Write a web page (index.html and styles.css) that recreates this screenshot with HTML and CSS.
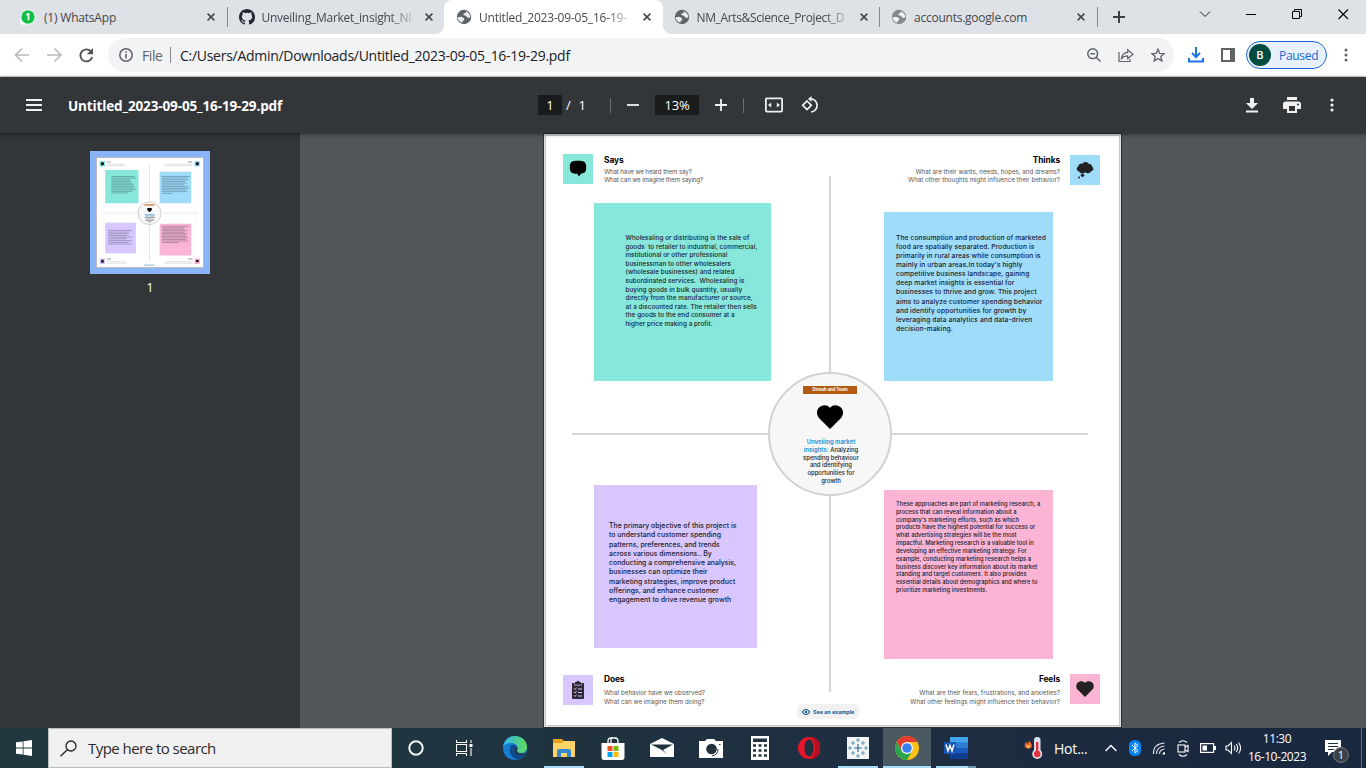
FILE: index.html
```html
<!DOCTYPE html>
<html lang="en">
<head>
<meta charset="utf-8">
<title>Untitled_2023-09-05_16-19-29.pdf</title>
<link rel="stylesheet" href="styles.css">
</head>
<body>
<svg class="defs" width="0" height="0">
  <symbol id="globe" viewBox="0 0 16 16"><circle cx="8" cy="8" r="7.2" fill="currentColor"/><path d="M1.500 8.300 5.300 7.800 8 9.300 8.300 11 6.400 12.300 6.600 13.700 4.200 12.800 2 10.500Z M8.500 1.800 10.800 2.300 9.500 4 7.500 4.500 7.600 6.300 10 6.800 11.500 8.800 14 8.800 14.300 7 12.800 4.300 11 3Z" fill="#fff" opacity=".88"/></symbol>
  <symbol id="x" viewBox="0 0 8 8"><path d="M.6.6 7.4 7.4M7.4.6.6 7.4" stroke="#45494d" stroke-width="1.6"/></symbol>
  <symbol id="heart" viewBox="0 0 26 24"><path d="M13 24 2.2 13.2C-.8 10.1-.6 5.4 1.8 2.8 4.800-.5 10-.7 13 2.700 16-.7 21.200-.5 24.200 2.800 26.600 5.400 26.800 10.100 23.800 13.200Z"/></symbol>
</svg>

<header class="tabs">
  <div class="tab"><svg class="fav" viewBox="0 0 16 16"><path d="M.5 15.500V8A7.500 7.500 0 1 1 8 15.500Z" fill="#fff"/><circle cx="8" cy="8" r="6.700" fill="#0fbf43"/><path d="M6.400 5.900 8.500 4.900V11.300" stroke="#fff" stroke-width="1.700" fill="none"/></svg><span class="label">(1) WhatsApp</span><svg class="close"><use href="#x"/></svg></div>
  <div class="tab line"><svg class="fav" viewBox="0 0 16 16"><path fill="#24292f" d="M8 0C3.580 0 0 3.580 0 8c0 3.540 2.290 6.530 5.470 7.590.4.070.55-.17.55-.38v-1.490c-2.010.37-2.530-.49-2.690-.94-.09-.23-.48-.94-.82-1.130-.28-.15-.68-.52-.01-.53.63-.01 1.080.58 1.230.82.72 1.210 1.870.87 2.330.66.07-.52.28-.87.51-1.070-1.780-.2-3.640-.89-3.640-3.950 0-.87.31-1.590.82-2.150-.08-.2-.36-1.020.08-2.120 0 0 .67-.21 2.200.82a7.500 7.500 0 0 1 4 0c1.530-1.040 2.200-.82 2.200-.82.44 1.100.16 1.920.08 2.120.51.560.82 1.270.82 2.150 0 3.070-1.870 3.750-3.650 3.950.29.250.54.730.54 1.480v2.200c0 .21.150.46.550.38A8 8 0 0 0 16 8c0-4.420-3.580-8-8-8Z"/></svg><span class="label fade git">Unveiling_Market_insight_NI</span><svg class="close"><use href="#x"/></svg></div>
  <div class="tab active"><svg class="fav"><use href="#globe"/></svg><span class="label fade">Untitled_2023-09-05_16-19-</span><svg class="close"><use href="#x"/></svg></div>
  <div class="tab"><svg class="fav"><use href="#globe"/></svg><span class="label fade nm">NM_Arts&amp;Science_Project_D</span><svg class="close"><use href="#x"/></svg></div>
  <div class="tab line"><svg class="fav pale"><use href="#globe"/></svg><span class="label acc">accounts.google.com</span><svg class="close"><use href="#x"/></svg></div>
  <div class="newtab"><svg width="12" height="12"><path d="M6 0V12M0 6H12" stroke="#3c4043" stroke-width="2"/></svg></div>
  <div class="winbtns">
    <svg width="46" height="28"><path d="M18 11.500 23 16.500 28 11.500" fill="none" stroke="#222"/></svg>
    <svg width="46" height="28"><path d="M18 14.500H28" stroke="#000"/></svg>
    <svg width="46" height="28"><path d="M18.500 11.500H25.500V18.500H18.500ZM20.500 11V9.500H27.500V16.500H26" fill="none" stroke="#000"/></svg>
    <svg width="46" height="28"><path d="M18.500 9.500 28 19M28 9.500 18.500 19" stroke="#000" stroke-width="1.100"/></svg>
  </div>
</header>

<div class="toolbar">
  <svg class="navs" width="86" height="20"><g fill="none" stroke="#b9bbbe" stroke-width="1.700"><path d="M20 10H7M13 3.500 6.500 10 13 16.500M38 10H52M45.500 3.500 52 10 45.500 16.500"/></g><path d="M82 6.500A6 6 0 1 0 83.200 12" fill="none" stroke="#505357" stroke-width="1.900"/><path d="M84 3V9.200H77.800Z" fill="#505357"/></svg>
  <div class="omnibox">
    <svg width="14" height="14"><circle cx="7" cy="7" r="6.200" fill="none" stroke="#5f6368" stroke-width="1.500"/><path d="M7 6V10.500M7 3.300V4.800" stroke="#5f6368" stroke-width="1.600"/></svg>
    <span class="scheme">File</span><i class="bar"></i><span class="url">C:/Users/Admin/Downloads/Untitled_2023-09-05_16-19-29.pdf</span>
    <div class="omni-icons">
      <svg width="14" height="14"><g fill="none" stroke="#5f6368" stroke-width="1.500"><circle cx="5.700" cy="5.700" r="4.900"/><path d="M9.200 9.200 13.500 13.500M3.300 5.700H8"/></g></svg>
      <svg width="16" height="15"><g fill="none" stroke="#5f6368" stroke-width="1.200"><path d="M1 4V13.500H12V11M3.500 10.500C4 6.500 6 4.700 9.700 4.400V1.700L15 6.300 9.700 10.800V7.900C7 7.900 5 8.700 3.500 10.500Z"/></g></svg>
      <svg width="14" height="14"><path d="M7 1.200 8.700 5.300 13.200 5.700 9.800 8.600 10.900 13 7 10.600 3.100 13 4.200 8.600.8 5.700 5.300 5.300Z" fill="none" stroke="#5f6368" stroke-width="1.300"/></svg>
    </div>
  </div>
  <svg class="dl" width="16" height="16"><path d="M8 0V9.500M4 6 8 10 12 6M1 11V14.500H15V11" fill="none" stroke="#1a73e8" stroke-width="2"/></svg>
  <svg class="side" width="14" height="14"><path d="M1 1H13V13H1Z" fill="none" stroke="#5f6368" stroke-width="2"/><path d="M9 1H13V13H9Z" fill="#5f6368"/></svg>
  <div class="profile"><b>B</b><span>Paused</span></div>
  <svg class="more" width="4" height="14" fill="#5f6368"><circle cx="2" cy="2" r="1.500"/><circle cx="2" cy="7" r="1.500"/><circle cx="2" cy="12" r="1.500"/></svg>
</div>

<div class="pdfbar">
  <div class="pdf-left"><svg width="16" height="12"><path d="M0 1H16M0 6H16M0 11H16" stroke="#f1f1f1" stroke-width="2"/></svg><span class="pdf-title">Untitled_2023-09-05_16-19-29.pdf</span></div>
  <div class="pdf-mid">
    <span class="box pg">1</span><span class="of">/&nbsp; 1</span><i></i>
    <svg class="minus" width="12" height="12"><path d="M0 6H12" stroke="#f1f1f1" stroke-width="1.800"/></svg>
    <span class="box pct">13%</span>
    <svg class="plus" width="12" height="12"><path d="M0 6H12M6 0V12" stroke="#f1f1f1" stroke-width="1.800"/></svg><i class="second"></i>
    <svg class="fit" width="18" height="16"><rect x=".9" y="1.400" width="16.200" height="13.200" rx="1" fill="none" stroke="#f1f1f1" stroke-width="1.800"/><path d="M3 8 6.200 5.600V10.400ZM15 8 11.800 5.600V10.400Z" fill="#f1f1f1"/></svg>
    <svg class="rotate" width="18" height="18"><path d="M6 5 10.300 9.300 6 13.600 1.700 9.300ZM9 2.800A6.600 6.600 0 1 1 10 16" fill="none" stroke="#f1f1f1" stroke-width="1.700"/><path d="M10.500 0V6L7 3Z" fill="#f1f1f1"/></svg>
  </div>
  <div class="pdf-right">
    <svg width="12" height="16"><path d="M4 1H8V6H12L6 12 0 6H4ZM0 13.500H12V15.500H0Z" fill="#f1f1f1"/></svg>
    <svg width="18" height="16"><path d="M4 0H14V3H4ZM3 4.500H15Q18 4.500 18 7V12H14V16H4V12H0V7Q0 4.500 3 4.500ZM6 9V14H12V9Z" fill="#f1f1f1" fill-rule="evenodd"/><circle cx="15" cy="7.500" r="1" fill="#323639"/></svg>
    <svg width="4" height="14" fill="#f1f1f1"><circle cx="2" cy="2" r="1.600"/><circle cx="2" cy="7" r="1.600"/><circle cx="2" cy="12" r="1.600"/></svg>
  </div>
</div>

<main>
  <aside>
    <div class="thumb">
      <svg width="108" height="111" viewBox="0 0 577 593">
        <rect x="2" y="2" width="573" height="589" fill="#fff" stroke="#bbb" stroke-width="7"/>
        <path d="M286 42V558" stroke="#ddd" stroke-width="4"/><path d="M28 300H544" stroke="#eee" stroke-width="7"/>
        <path d="M49 70H227V247H49Z" fill="#87e7da"/><path d="M340 79H509V247H340Z" fill="#9fdcfa"/><path d="M49 351H213V515H49Z" fill="#d8c7fe"/><path d="M340 357H509V526H340Z" fill="#fcb4d4"/>
        <path d="M19 21H49V51H19Z" fill="#87e7da"/><path d="M526 21H556V51H526Z" fill="#9fdcfa"/><path d="M19 542H49V572H19Z" fill="#d8c7fe"/><path d="M526 542H556V572H526Z" fill="#fcb4d4"/>
        <g fill="#111"><circle cx="34" cy="36" r="9"/><circle cx="541" cy="36" r="9"/><path d="M28 549H41V565H28Z"/><use href="#heart" x="532" y="549" width="18" height="16"/></g>
        <circle cx="286" cy="300" r="61" fill="#f7f7f7" stroke="#ccc" stroke-width="5"/><path d="M259 252H312V260H259Z" fill="#d28a4c"/><use href="#heart" x="273" y="271" width="26" height="24"/>
        <g stroke="#234" stroke-width="3.500" opacity=".5"><path d="M82 104H206M82 113H213M82 122H183M82 131H188M82 140H192M82 148H202M82 157H200M82 166H209M82 175H213M82 184H194M82 192H168M352 104H502M352 113H489M352 122H494M352 131H476M352 140H484M352 149H470M352 158H492M352 167H498M352 176H482M352 185H487M352 194H408M65 392H191M65 401H177M65 410H175M65 419H166M65 428H191M65 437H163M65 447H191M65 456H174M65 465H189M352 370H497M352 378H472M352 386H473M352 394H490M352 402H472M352 409H488M352 417H482M352 425H485M352 433H492M352 441H480M352 449H493M352 457H441"/><path d="M59 26H78M490 26H515M59 545H80M492 545H515" stroke-width="5"/><path d="M59 38H148M59 46H158M370 38H515M363 46H515M59 559H160M59 568H160M377 559H515M365 568H515" stroke-width="3" opacity=".55"/></g>
        <path d="M261 308H312M262 315H282" stroke="#37a5df" stroke-width="4"/><path d="M285 315H314M259 323H315M266 331H308M264 339H310M276 347H296" stroke="#888" stroke-width="4"/><path d="M255 578H314" stroke="#a8cbdc" stroke-width="7"/>
      </svg>
    </div>
    <span class="thumb-no">1</span>
  </aside>
  <section class="viewer">
    <article class="page">
      <div class="axis vert"></div><div class="axis horiz"></div>

      <div class="tile says-tile"><svg width="18" height="18"><path d="M9 .8C14.500.8 17.200 1.500 17.200 7S15.500 13 12.500 13.500L9.500 16.500 8.500 13.700C2.500 13.700 .8 12.500 .8 7S3.500.8 9 .8Z"/></svg></div>
      <div class="head says-head"><h2>Says</h2><p>What have we heard them say?<br>What can we imagine them saying?</p></div>
      <div class="tile thinks-tile"><svg width="18" height="18" fill="#222"><path d="M3 10.500C0 9.800.1 6.400 2.200 5.400 2.700 2.800 5 2.200 6.500 2.700 8 .2 12 .8 12.700 3 15 2.600 16.300 4.400 16.100 5.800 18.300 7.300 17.500 10 15 10.200 14 12.800 10.600 12.800 9.500 11.300 7.300 13 4 12.600 3 10.500Z"/><circle cx="6.500" cy="14.300" r="1.700"/><circle cx="3" cy="16.500" r="1"/></svg></div>
      <div class="head right thinks-head"><h2>Thinks</h2><p>What are their wants, needs, hopes, and dreams?<br>What other thoughts might influence their behavior?</p></div>
      <div class="tile does-tile"><svg width="14" height="20"><path d="M1.500 3H3.500V5.500H10.500V3H12.500Q13 3 13 3.500V18Q13 19 12 19H2Q1 19 1 18V3.500Q1 3 1.500 3Z" fill="#2d2935"/><path d="M4 2H5.500Q7-.5 8.500 2H10V4.800H4Z" fill="#2d2935"/><path d="M3 8.500 4 9.500 5.500 7.700M3 12 4 13 5.500 11.200M3 15.500 4 16.500 5.500 14.700M7 9H11M7 12.500H11M7 16H11" stroke="#d8c7fe" fill="none"/></svg></div>
      <div class="head does-head low"><h2>Does</h2><p>What behavior have we observed?<br>What can we imagine them doing?</p></div>
      <div class="tile feels-tile"><svg width="18" height="16" fill="#222"><use href="#heart"/></svg></div>
      <div class="head right feels-head low"><h2>Feels</h2><p>What are their fears, frustrations, and anxieties?<br>What other feelings might influence their behavior?</p></div>

      <div class="note says">Wholesaling or distributing is the sale of
goods  to retailer to industrial, commercial,
institutional or other professional
businessman to other wholesalers
(wholesale businesses) and related
subordinated services.  Wholesaling is
buying goods in bulk quantity, usually
directly from the manufacturer or source,
at a discounted rate. The retailer then sells
the goods to the end consumer at a
higher price making a profit.</div>
      <div class="note thinks">The consumption and production of marketed
food are spatially separated. Production is
primarily in rural areas while consumption is
mainly in urban areas.In today's highly
competitive business landscape, gaining
deep market insights is essential for
businesses to thrive and grow. This project
aims to analyze customer spending behavior
and identify opportunities for growth by
leveraging data analytics and data-driven
decision-making.</div>
      <div class="note does">The primary objective of this project is
to understand customer spending
patterns, preferences, and trends
across various dimensions.. By
conducting a comprehensive analysis,
businesses can optimize their
marketing strategies, improve product
offerings, and enhance customer
engagement to drive revenue growth</div>
      <div class="note feels">These approaches are part of marketing research, a
process that can reveal information about a
company's marketing efforts, such as which
products have the highest potential for success or
what advertising strategies will be the most
impactful. Marketing research is a valuable tool in
developing an effective marketing strategy. For
example, conducting marketing research helps a
business discover key information about its market
standing and target customers. It also provides
essential details about demographics and where to
prioritize marketing investments.</div>

      <div class="hub">
        <span class="team">Dinesh and Team</span>
        <svg width="26" height="24"><use href="#heart"/></svg>
        <p><em>Unveiling market<br>insights:</em> Analyzing<br>spending behaviour<br>and identifying<br>opportunities for<br>growth</p>
      </div>
      <div class="example"><svg width="8" height="6"><path d="M.4 3Q4-2 7.600 3 4 8 .4 3Z" fill="none" stroke="#145e96" stroke-width="1.100"/><circle cx="4" cy="3" r="1.200" fill="#145e96"/></svg><span>See an example</span></div>
    </article>
  </section>
</main>

<footer class="taskbar">
  <div class="start"><svg width="16" height="16" fill="#fff"><path d="M0 2.300 6.700 1.400V7.500H0ZM7.500 1.300 16 0V7.500H7.500ZM0 8.400H6.700V14.600L0 13.700ZM7.500 8.400H16V16L7.500 14.700Z"/></svg></div>
  <div class="search"><svg width="17" height="17"><g fill="none" stroke="#222" stroke-width="1.300"><circle cx="11" cy="6" r="5"/><path d="M7.300 9.700.5 16.300"/></g></svg><span>Type here to search</span></div>
  <div class="sys"><svg width="16" height="16"><circle cx="8" cy="8" r="6.700" fill="none" stroke="#f4f4f4" stroke-width="2"/></svg></div>
  <div class="sys"><svg width="17" height="16"><path d="M.5 0V2.500H10.500V0M.5 16V13.500H10.500V16M.5 4.500H10.500V11.500H.5ZM15 0V3M15 8V16" fill="none" stroke="#fff" stroke-width="1.100"/><path d="M13.500 4H16.500V7H13.500Z" fill="#fff"/></svg></div>
  <div class="apps">
    <div><svg width="24" height="24"><defs><linearGradient id="e1"><stop stop-color="#33b5ef"/><stop offset="1" stop-color="#5ddb5b"/></linearGradient></defs><circle cx="12" cy="12" r="12" fill="#167fd3"/><path d="M0 11C1 4 6 0 12 0 19 0 24 5 24 11 24 15 21 17 18 17 15 17 13 16 14 14 16 11 13 7 8.500 7 4 7 1 9 0 11Z" fill="url(#e1)"/><path d="M8.500 9C5 12 6 22 15 23.600 19 23 22 20 23 17.500 19 20 12 20 11.500 14 11.500 11.500 13 11 14 12 14 9 11 7.500 8.500 9Z" fill="#104a91"/><path d="M14 11C11 11 10.500 15 12.500 17.200 15 20 20 20 23 17L24 16C21 18 14 18 14 14.500 14.500 13.500 15 12 14 11Z" fill="#203b46"/></svg></div>
    <div class="run"><svg width="22" height="18"><path d="M0 0H9L11 2H22V18H0Z" fill="#e9a21b"/><path d="M0 4H9L11 2H22V18H0Z" fill="#ffd366"/><path d="M4 18V12Q4 10 6 10H16Q18 10 18 12V18H14V14H8V18Z" fill="#3288cf"/></svg></div>
    <div><svg width="24" height="23"><path d="M7 8V4Q7 1 10 1H14Q17 1 17 4V8M10 6V3Q10 0 13 1" fill="none" stroke="#fff" stroke-width="1.300"/><path d="M.5 6H23.500V20Q23.500 23 21 23H3Q.5 23 .5 20Z" fill="#fff"/><path d="M6.500 9H11.500V14H6.500Z" fill="#f25022"/><path d="M12.500 9H17.500V14H12.500Z" fill="#7fba00"/><path d="M6.500 15H11.500V20H6.500Z" fill="#00a4ef"/><path d="M12.500 15H17.500V20H12.500Z" fill="#ffb900"/></svg></div>
    <div><svg width="24" height="20"><path d="M0 6 12 0 24 6V19H0Z" fill="#fff"/><path d="M1 6.500H23L13 12 17 16 11 11.500Z" fill="#20343f"/></svg></div>
    <div><svg width="24" height="19"><path d="M0 2H6L8 0H15L17 2H24V19H0Z" fill="#fff"/><circle cx="12.500" cy="10" r="5.300" fill="#20343f"/><path d="M13 17Q19 16 19 10" stroke="#20343f" fill="none"/><path d="M20 5.500H21.500" stroke="#20343f"/></svg></div>
    <div><svg width="18" height="24"><path d="M0 0H18V24H0Z" fill="#fff"/><path d="M2 2.500H16V6H2Z" fill="#20343f"/><path d="M2 9.500H5M7.500 9.500H10.500M13 9.500H16M2 14.500H5M7.500 14.500H10.500M13 14.500H16M2 19.500H5M7.500 19.500H10.500M13 19.500H16" stroke="#20343f" stroke-width="2.600"/></svg></div>
    <div><svg width="22" height="22"><ellipse cx="11" cy="11" rx="11" ry="11" fill="#e8162a"/><path d="M12 0A11 11 0 0 1 12 22C19 18 19 4 12 0Z" fill="#b80e20"/><ellipse cx="11" cy="11" rx="4.600" ry="8.500" fill="#20303f"/></svg></div>
    <div class="run"><svg width="22" height="22"><path d="M0 0H22V22H0Z" fill="#f2f4f5"/><g stroke="#376d91" stroke-width="1.200"><path d="M11 7V15M7 11H15"/><path d="M11 1V5M9 3H13M11 17V21M9 19H13M3 9V13M1 11H5M19 9V13M17 11H21M6 4V8M4 6H8M16 4V8M14 6H18M6 14V18M4 16H8M16 14V18M14 16H18" stroke="#6f9eb8"/></g></svg></div>
    <div class="run current"><svg width="24" height="24"><circle cx="12" cy="12" r="12" fill="#fbc116"/><path d="M1.600 6A12 12 0 0 1 22.400 6H12L6.800 15Z" fill="#e33b2e"/><path d="M1.600 6A12 12 0 0 0 12 24L17.200 15 12 18 6.800 15Z" fill="#2da44e"/><circle cx="12" cy="12" r="6" fill="#fff"/><circle cx="12" cy="12" r="4.800" fill="#387ef0"/></svg></div>
    <div class="run word"><svg width="24" height="22"><path d="M6 0H24V6H6Z" fill="#41a5ee"/><path d="M6 5.500H24V11H6Z" fill="#2b7cd3"/><path d="M6 11H24V16.500H6Z" fill="#185abd"/><path d="M6 16.500H24V22H6Z" fill="#103f91"/><path d="M0 5H12V17H0Z" fill="#1755b5"/><path d="M2 7.500 4 14 6 8.500 8 14 10 7.500" fill="none" stroke="#fff" stroke-width="1.500"/></svg></div>
  </div>
  <div class="weather"><svg width="20" height="22"><path d="M5 4Q9 7 7.500 10.500 4 13 .8 10 0 7 2 5L3.500 7Z" fill="#f4652d"/><circle cx="4.300" cy="9.500" r="1.500" fill="#ffd34d"/><rect x="10" y="0" width="6.500" height="18" rx="3.200" fill="#d9dfef"/><circle cx="13.200" cy="17" r="5" fill="#d9dfef"/><circle cx="13.200" cy="17" r="3.300" fill="#df323e"/><path d="M13.200 5V17" stroke="#df323e" stroke-width="2.400"/></svg><span>Hot...</span></div>
  <div class="tray">
    <svg width="12" height="16"><path d="M.6 11 6 5.500 11.400 11" fill="none" stroke="#fff" stroke-width="1.300"/></svg>
    <svg width="12" height="16"><rect width="12" height="16" rx="5.500" fill="#0a84f0"/><path d="M3 5 9 10.500 6 13V3L9 5.500 3 11" fill="none" stroke="#fff"/></svg>
    <svg width="14" height="14"><g fill="none" stroke="#e4e8ed" stroke-width="1.100"><path d="M1.500 13Q1 3 12.500 2M4.500 13Q4.500 6 12.500 5M7.500 13Q7.500 8.800 12.500 8"/></g><path d="M10.500 13.500Q10.500 11 13 11V13.500Z" fill="#fff"/></svg>
    <svg width="12" height="17"><g fill="none" stroke="#fff" stroke-width="1.100"><rect x="1" y="5" width="7" height="7"/><path d="M8 7 11 5.500V11.500L8 10M2 2.500Q6-1 10 2.500M2 14.500Q6 18 10 14.500"/></g></svg>
    <svg width="16" height="10"><rect x=".6" y=".6" width="13" height="8.800" fill="none" stroke="#fff" stroke-width="1.200"/><path d="M2.500 2.500H7V7.500H2.500ZM14 3H16V7H14Z" fill="#fff"/></svg>
    <svg width="17" height="14"><g fill="none" stroke="#fff" stroke-width="1.100"><path d="M1 5H3L6.500 1.500V12.500L3 9H1ZM9 4.500Q11 7 9 9.500M11.200 3Q14.200 7 11.200 11M13.500 1.500Q17.800 7 13.500 12.500"/></g></svg>
  </div>
  <div class="clock"><span>11:30</span><span>16-10-2023</span></div>
  <div class="notify"><svg width="16" height="16"><path d="M0 0H16V12H7L3 16V12H0Z" fill="#fff"/><path d="M3 3.500H13M3 6.500H13M3 9.500H9" stroke="#1d2d45"/></svg><span>1</span></div>
  <div class="desk"></div>
</footer>
</body>
</html>
```
FILE: styles.css
```css
* { box-sizing: border-box; }
body { margin: 0; width: 1366px; height: 768px; overflow: hidden; display: flex; flex-direction: column; font-family: "Open Sans", "Noto Sans", sans-serif; font-size: 12px; color: #202124; }
svg { display: block; flex: none; }
.defs { position: absolute; }
h2, p { margin: 0; }

/* tab strip */
.tabs { height: 34px; flex: none; background: #dee1e6; display: flex; padding-left: 9px; }
.tab { width: 217.5px; height: 34px; display: flex; align-items: center; padding-left: 12px; position: relative; color: #45494d; }
.fav { width: 16px; height: 16px; color: #5f6368; margin-right: 7px; }
.tab:first-child .fav { margin-left: -1px; margin-right: 8px; }
.pale { color: #85888b; }
.label { width: 152px; white-space: nowrap; letter-spacing: -.2px; }
.git { letter-spacing: -.26px; }
.nm { letter-spacing: -.36px; }
.fade { -webkit-mask-image: linear-gradient(to right, #000 128px, rgba(0,0,0,.12) 152px); }
.acc { letter-spacing: -.24px; }
.close { width: 8px; height: 8px; margin-left: 11px; }
.line::before, .newtab::before { content: ""; position: absolute; left: 0; top: 7px; width: 1px; height: 20px; background: #84878b; }
.active { background: #fff; border-radius: 8px 8px 0 0; width: 219px; margin-right: -1.5px; z-index: 1; }
.active .close { margin-left: 11.500px; }
.active::before, .active::after { content: ""; position: absolute; bottom: 0; width: 8px; height: 8px; }
.active::before { left: -8px; background: radial-gradient(circle at 0 0, #dee1e6 7.5px, #fff 8px); }
.active::after { right: -8px; background: radial-gradient(circle at 100% 0, #dee1e6 7.5px, #fff 8px); }
.newtab { position: relative; padding: 11px 0 0 16px; width: 40px; }
.winbtns { display: flex; margin-left: auto; }

/* address row */
.toolbar { height: 43px; flex: none; background: #fff; border-bottom: 1px solid #d5d7da; display: flex; align-items: center; padding: 0 19px 0 9px; }
.omnibox { height: 34px; width: 1066px; flex: none; margin-left: 13px; border-radius: 17px; background: #f1f3f4; display: flex; align-items: center; padding: 0 7px 0 11px; font-size: 14px; }
.scheme { color: #5f6368; margin-left: 9px; width: 28px; letter-spacing: -.4px; }
.bar { width: 1px; height: 16px; background: #85898d; margin-right: 9px; }
.url { letter-spacing: -.28px; white-space: nowrap; }
.omni-icons { margin-left: auto; margin-right: 2px; display: flex; gap: 17px; align-items: center; }
.dl { margin-left: 14px; }
.side { margin-left: 17px; }
.profile { width: 81px; height: 28px; flex: none; margin-left: 11px; border: 1px solid #1967d2; border-radius: 14px; background: #e8f0fb; display: flex; align-items: center; padding-left: 2px; color: #1967d2; }
.profile b { width: 22px; height: 22px; border-radius: 11px; background: #004d40; color: #fff; text-align: center; line-height: 22px; font-size: 11px; margin-right: 8px; font-weight: 600; }
.profile span { letter-spacing: -.3px; }
.more { margin-left: 17px; }

/* pdf toolbar */
.pdfbar { height: 56px; flex: none; background: #323639; color: #fff; display: flex; align-items: center; padding: 0 32px 0 26px; box-shadow: 0 1px 4px rgba(0,0,0,.55); z-index: 2; }
.pdf-left { display: flex; align-items: center; width: 512px; }
.pdf-title { font-weight: 700; font-size: 13.500px; margin-left: 26px; letter-spacing: -.13px; padding-top: 1px; }
.pdf-mid { display: flex; align-items: center; font-size: 13px; }
.pdf-mid i { width: 1px; height: 15px; background: #6b6e70; margin-left: 24px; margin-right: 16px; }
.box { background: #191b1c; height: 20px; line-height: 21px; text-align: center; }
.pg { width: 24px; }
.of { width: 20px; margin-left: 4px; white-space: nowrap; word-spacing: .5px; }
.pct { width: 44px; margin: 0 16px; letter-spacing: -.2px; }
.pdf-mid .second { margin: 0 21px 0 16px; }
.rotate { margin-left: 18px; }
.pdf-right { margin-left: auto; display: flex; gap: 31px; align-items: center; }
.pdf-right svg:nth-child(2) { margin-left: -6px; margin-right: -2px; }

/* document area */
main { flex: 1; display: flex; min-height: 0; }
aside { width: 300px; background: #323639; display: flex; flex-direction: column; align-items: center; padding-top: 18px; }
.thumb { border: 6px solid #8ab4f8; width: 120px; height: 123px; background: #fff; }
.thumb-no { color: #fff; font-size: 13px; margin-top: 4px; line-height: 18px; }
.viewer { flex: 1; background: #525659; padding-left: 244px; }
.page { position: relative; width: 577px; height: 593px; margin-top: 1px; background: #fff; box-shadow: 0 0 0 1px #2e3032, inset 0 0 0 1px #e0e0e0, inset 0 0 0 2px #c8c8c8; font-family: Inter, "Open Sans", sans-serif; color: #202124; }
.axis { position: absolute; background: #d4d4d4; }
.vert { left: 285px; top: 42px; width: 2px; height: 516px; }
.horiz { left: 28px; top: 299px; width: 516px; height: 2px; }
.tile { position: absolute; width: 30px; height: 30px; display: grid; place-items: center; }
.says-tile { left: 19px; top: 20px; background: #87e7da; }
.thinks-tile { left: 526px; top: 21px; background: #9fdcfa; }
.does-tile { left: 19px; top: 541px; background: #d8c7fe; }
.feels-tile { left: 526px; top: 540px; background: #fcb4d4; }
.head { position: absolute; font-size: 6.200px; line-height: 8px; color: #555; white-space: nowrap; }
.head h2 { font-size: 8.400px; line-height: 11px; color: #000; font-weight: 700; margin-bottom: 2px; letter-spacing: -.1px; }
.head.low h2 { margin-bottom: 4px; }
.head.low { line-height: 8.500px; }
.right { text-align: right; right: 61px; }
.says-head { left: 60px; top: 21px; letter-spacing: -.13px; }
.thinks-head { top: 21px; }
.does-head { left: 60px; top: 540px; }
.feels-head { top: 540px; letter-spacing: .01px; }
.note { position: absolute; white-space: pre; color: #17202b; font-weight: 500; }
.says { left: 50px; top: 69px; width: 177px; height: 178px; background: #87e7da; padding: 31px 0 0 31.500px; font-size: 6.300px; line-height: 8.600px; letter-spacing: .08px; }
.thinks { left: 340px; top: 78px; width: 169px; height: 169px; background: #9fdcfa; padding: 21.500px 0 0 12px; font-size: 6.700px; line-height: 9.150px; letter-spacing: .09px; }
.does { left: 50px; top: 351px; width: 163px; height: 163px; background: #d8c7fe; padding: 36px 0 0 15px; font-size: 6.900px; line-height: 9.250px; letter-spacing: .02px; }
.feels { left: 340px; top: 356px; width: 169px; height: 169px; background: #fcb4d4; padding: 10px 0 0 12px; font-size: 5.800px; line-height: 7.820px; letter-spacing: .01px; }
.hub { position: absolute; left: 224px; top: 238px; width: 124px; height: 124px; border-radius: 50%; border: 2px solid #d2d2d2; background: #f7f7f7; display: flex; flex-direction: column; align-items: center; padding-top: 12px; text-align: center; }
.team { width: 54px; height: 8px; background: #b35a0e; color: #fff; font-size: 4.200px; line-height: 8px; font-weight: 700; margin-bottom: 11px; }
.hub p { font-size: 5.900px; line-height: 7.800px; font-weight: 500; margin-top: 9px; padding-left: 2px; white-space: nowrap; }
.hub em { font-style: normal; font-weight: 700; color: #2f9bd8; }
.example { position: absolute; left: 253px; top: 570px; width: 62px; height: 15px; border-radius: 5px; background: #f1f1f1; display: flex; align-items: center; padding-left: 5px; gap: 3px; font-size: 5.400px; font-weight: 700; color: #145e96; white-space: nowrap; }

/* taskbar */
.taskbar { height: 40px; flex: none; display: flex; position: relative; background: linear-gradient(to right, #20383f, #20353f 35%, #1e2d40 65%, #19273f); color: #fff; z-index: 3; }
.start { width: 48px; display: grid; place-items: center; }
.search { width: 344px; background: #f1f1f1; border: 1px solid #b9bdbd; color: #2b2b2b; display: flex; align-items: center; padding-left: 11px; gap: 11px; font-size: 15px; }
.search span { letter-spacing: -.54px; }
.sys { width: 48px; display: grid; place-items: center; }
.apps { display: flex; margin-left: 2px; }
.apps div { width: 49px; display: grid; place-items: center; position: relative; }
.run::after { content: ""; position: absolute; left: 5px; right: 4px; bottom: 0; height: 2px; background: #a6dcf8; }
.current { background: #4b5963; border-left: 1px solid #1e2e3f; }
.current::after { left: 0; right: 0; }
.word::after { background: linear-gradient(to right, #a6dcf8 32px, #7295ad 32px); }
.weather { margin-left: 44px; display: flex; align-items: center; gap: 10px; width: 81px; font-size: 14px; }
.weather span { letter-spacing: -.2px; }
.tray { display: flex; align-items: center; gap: 11px; width: 141px; }
.tray svg:nth-child(n+2) { margin-left: 1px; margin-right: -1px; }
.tray svg:nth-child(4) { margin-right: 0; }
.tray svg:nth-child(n+5) { margin-left: 0; margin-right: -2px; }
.clock { display: flex; flex-direction: column; align-items: center; justify-content: center; width: 62px; font-size: 12px; line-height: 18px; letter-spacing: -.45px; }
.notify { position: relative; padding: 12px 0 0 17px; }
.notify span { position: absolute; left: 25px; top: 19px; width: 16px; height: 16px; border-radius: 50%; background: #3c4148; border: 1px solid #777; text-align: center; line-height: 14px; font-size: 11px; }
.desk { margin-left: auto; width: 5px; border-left: 1px solid #66717d; }
```
